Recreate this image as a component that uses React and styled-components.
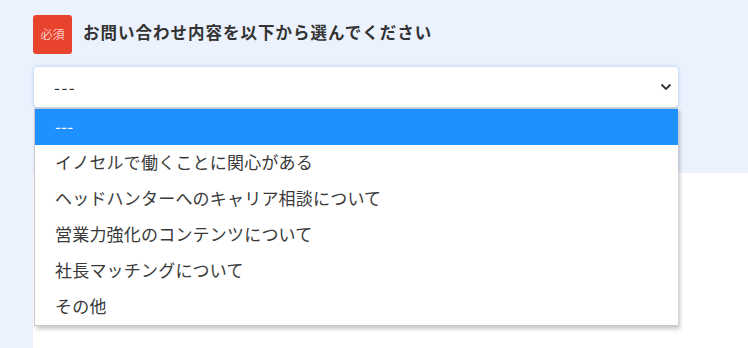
import React from 'react'
import styled, { createGlobalStyle } from 'styled-components'

const options = [
  '---',
  'イノセルで働くことに関心がある',
  'ヘッドハンターへのキャリア相談について',
  '営業力強化のコンテンツについて',
  '社長マッチングについて',
  'その他',
]

const App = () => {
  const selected = 0
  return (
    <>
      <GlobalStyle />
      <Page>
        <Gutter />
        <Main>
          <Band>
            <FieldHeader>
              <RequiredBadge>必須</RequiredBadge>
              <Label>お問い合わせ内容を以下から選んでください</Label>
            </FieldHeader>
            <SelectWrap>
              <SelectBox>
                <Placeholder>---</Placeholder>
                <Chevron width="12" height="8" viewBox="0 0 12 8">
                  <path d="M1.5 1.5 L6 6 L10.5 1.5" />
                </Chevron>
              </SelectBox>
              <Menu>
                {options.map((opt, i) => (
                  <Option key={opt} active={i === selected ? 1 : 0}>
                    {opt}
                  </Option>
                ))}
              </Menu>
            </SelectWrap>
          </Band>
        </Main>
      </Page>
    </>
  )
}

export default App

const GlobalStyle = createGlobalStyle`
  body {
    margin: 0;
    background: #fff;
    font-family: 'Noto Sans CJK JP', 'Noto Sans', sans-serif;
    color: #333;
  }
`

const Page = styled.div`
  display: flex;
  width: 748px;
  height: 348px;
  overflow: hidden;
`

const Gutter = styled.div`
  width: 33px;
  flex: none;
  background: #ebf2fe;
`

const Main = styled.div`
  flex: 1;
`

const Band = styled.section`
  height: 173px;
  box-sizing: border-box;
  padding: 15px 70px 0 0;
  background: #ebf2fe;
`

const FieldHeader = styled.div`
  display: flex;
  align-items: center;
  gap: 11px;
`

const RequiredBadge = styled.span`
  display: flex;
  align-items: center;
  justify-content: center;
  width: 39px;
  height: 39px;
  box-sizing: border-box;
  padding-bottom: 2px;
  border-radius: 3px;
  background: #e8432d;
  color: #fff;
  font-size: 12px;
  font-weight: 300;
`

const Label = styled.h2`
  margin: 0;
  padding-bottom: 5px;
  font-size: 16.5px;
  letter-spacing: 1px;
  font-weight: 700;
  color: #333;
  line-height: 1;
`

const SelectWrap = styled.div`
  position: relative;
  margin: 13px 0 0 1px;
`

const SelectBox = styled.div`
  display: flex;
  align-items: center;
  justify-content: space-between;
  height: 40px;
  box-sizing: border-box;
  padding: 0 6px 2px 20px;
  background: #fff;
  border-radius: 4px;
  box-shadow: 0 0 4px rgba(120, 165, 235, 0.45), 0 1px 2px rgba(0, 0, 0, 0.12);
  font-size: 17px;
  color: #333;
`

const Placeholder = styled.span`
  letter-spacing: 1.5px;
`

const Chevron = styled.svg`
  margin-top: 2px;
  fill: none;
  stroke: #333;
  stroke-width: 1.8;
`

const Menu = styled.ul`
  position: absolute;
  top: 41px;
  left: 0;
  right: 0;
  margin: 0;
  padding: 0;
  list-style: none;
  background: #fff;
  border: 1px solid #c8c8c8;
  border-right: none;
  box-shadow: 2px 3px 4px rgba(0, 0, 0, 0.22);
`

const Option = styled.li`
  height: 36px;
  box-sizing: border-box;
  display: flex;
  align-items: center;
  padding: 0 0 3px 20px;
  font-size: 17px;
  letter-spacing: 0.2px;
  color: ${p => (p.active ? '#fff' : '#3a3a3a')};
  background: ${p => (p.active ? '#1e90ff' : '#fff')};
`
